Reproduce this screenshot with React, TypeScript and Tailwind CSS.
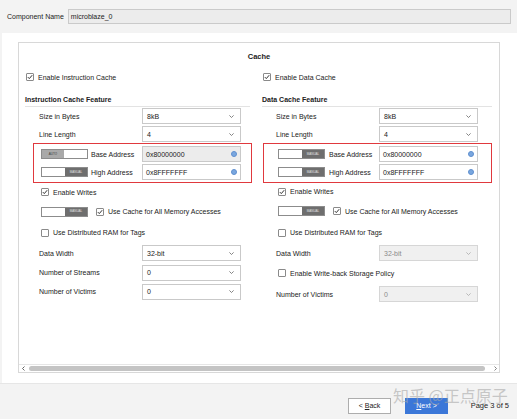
import React from "react";

function Check({ checked }: { checked: boolean }) {
  return (
    <span className="w-[8px] h-[8px] border border-[#8a8a8a] bg-white flex items-center justify-center shrink-0 rounded-[1px]">
      {checked && (
        <svg width="6" height="6" viewBox="0 0 6 6">
          <path d="M0.8 3.1 L2.3 4.6 L5.2 1.2" fill="none" stroke="#333" strokeWidth="1" />
        </svg>
      )}
    </span>
  );
}

function Toggle({ mode }: { mode: "auto" | "manual" }) {
  if (mode === "auto") {
    return (
      <div className="w-[47px] h-[10px] border border-[#8c8c8c] flex shrink-0">
        <div className="w-[22px] bg-[#a9a9a9] flex items-center justify-center text-[3px] leading-none text-[#3a3a3a]">AUTO</div>
        <div className="flex-1 bg-white" />
      </div>
    );
  }
  return (
    <div className="w-[47px] h-[10px] border border-[#8c8c8c] flex shrink-0">
      <div className="w-[23px] bg-white" />
      <div className="flex-1 bg-[#6e6e6e] flex items-center justify-center text-[3px] leading-none text-[#e0e0e0]">MANUAL</div>
    </div>
  );
}

function Chevron({ color = "#666" }: { color?: string }) {
  return (
    <svg width="5" height="3" viewBox="0 0 5 3">
      <path d="M0.4 0.4 L2.5 2.5 L4.6 0.4" fill="none" stroke={color} strokeWidth="0.8" />
    </svg>
  );
}

function Select({ value, disabled }: { value: string; disabled?: boolean }) {
  return (
    <div
      className={
        disabled
          ? "w-[99px] h-[16px] border border-[#d6d6d6] bg-[#f0f0f0] text-[#8a8a8a] flex items-center justify-between pl-[4px] pr-[6px] shrink-0"
          : "w-[99px] h-[16px] border border-[#c9c9c9] bg-white flex items-center justify-between pl-[4px] pr-[6px] shrink-0"
      }
    >
      <span>{value}</span>
      <Chevron color={disabled ? "#aaa" : "#666"} />
    </div>
  );
}

function AddrInput({ value, grey }: { value: string; grey?: boolean }) {
  return (
    <div
      className={
        grey
          ? "w-[99px] h-[16px] border border-[#c9c9c9] bg-[#ececec] flex items-center justify-between pl-[3px] pr-[3px] shrink-0"
          : "w-[99px] h-[16px] border border-[#c9c9c9] bg-white flex items-center justify-between pl-[3px] pr-[3px] shrink-0"
      }
    >
      <span>{value}</span>
      <span className="w-[6px] h-[6px] rounded-full bg-[#7aa7df] border border-[#5f8fcf]" />
    </div>
  );
}

function FieldRow({ label, children, h }: { label: string; children: React.ReactNode; h: string }) {
  return (
    <div className={`${h} flex items-center pl-[14px]`}>
      <span className="w-[103px] shrink-0">{label}</span>
      {children}
    </div>
  );
}

function CheckRow({ label, checked, h, pl }: { label: string; checked: boolean; h: string; pl: string }) {
  return (
    <div className={`${h} flex items-center ${pl} gap-[4px]`}>
      <Check checked={checked} />
      <span>{label}</span>
    </div>
  );
}

function LeftColumn() {
  return (
    <div className="w-[237px] shrink-0 flex flex-col">
      <div className="h-[20px] flex items-center pl-[1px] gap-[4px]">
        <Check checked />
        <span>Enable Instruction Cache</span>
      </div>
      <div className="mt-[6px] h-[14px] flex items-center border-b border-[#e3e3e3] mr-[12px] font-bold">
        Instruction Cache Feature
      </div>
      <FieldRow label="Size in Bytes" h="h-[18px]">
        <Select value="8kB" />
      </FieldRow>
      <FieldRow label="Line Length" h="h-[18px]">
        <Select value="4" />
      </FieldRow>
      <div className="ml-[8px] w-[219px] h-[40px] border border-[#e0393e] flex flex-col justify-center gap-[2px] pl-[7px] pr-[10px]">
        <div className="h-[16px] flex items-center">
          <Toggle mode="auto" />
          <span className="ml-[3px] flex-1">Base Address</span>
          <AddrInput value="0x80000000" grey />
        </div>
        <div className="h-[16px] flex items-center">
          <Toggle mode="manual" />
          <span className="ml-[3px] flex-1">High Address</span>
          <AddrInput value="0x8FFFFFFF" />
        </div>
      </div>
      <CheckRow label="Enable Writes" checked h="h-[18px]" pl="pl-[16px]" />
      <div className="h-[21px] flex items-center pl-[16px]">
        <Toggle mode="manual" />
        <span className="ml-[8px]">
          <Check checked />
        </span>
        <span className="ml-[4px]">Use Cache for All Memory Accesses</span>
      </div>
      <CheckRow label="Use Distributed RAM for Tags" checked={false} h="h-[21px]" pl="pl-[16px]" />
      <FieldRow label="Data Width" h="h-[20px]">
        <Select value="32-bit" />
      </FieldRow>
      <FieldRow label="Number of Streams" h="h-[19px]">
        <Select value="0" />
      </FieldRow>
      <FieldRow label="Number of Victims" h="h-[19px]">
        <Select value="0" />
      </FieldRow>
    </div>
  );
}

function RightColumn() {
  return (
    <div className="flex-1 flex flex-col">
      <div className="h-[20px] flex items-center pl-[1px] gap-[4px]">
        <Check checked />
        <span>Enable Data Cache</span>
      </div>
      <div className="mt-[6px] h-[14px] flex items-center border-b border-[#e3e3e3] mr-[7px] font-bold">
        Data Cache Feature
      </div>
      <FieldRow label="Size in Bytes" h="h-[18px]">
        <Select value="8kB" />
      </FieldRow>
      <FieldRow label="Line Length" h="h-[18px]">
        <Select value="4" />
      </FieldRow>
      <div className="ml-[1px] w-[229px] h-[40px] border border-[#e0393e] flex flex-col justify-center gap-[2px] pl-[14px] pr-[13px]">
        <div className="h-[16px] flex items-center">
          <Toggle mode="manual" />
          <span className="ml-[4px] flex-1">Base Address</span>
          <AddrInput value="0x80000000" />
        </div>
        <div className="h-[16px] flex items-center">
          <Toggle mode="manual" />
          <span className="ml-[4px] flex-1">High Address</span>
          <AddrInput value="0x8FFFFFFF" />
        </div>
      </div>
      <CheckRow label="Enable Writes" checked h="h-[17px]" pl="pl-[16px]" />
      <div className="h-[22px] flex items-center pl-[16px]">
        <Toggle mode="manual" />
        <span className="ml-[8px]">
          <Check checked />
        </span>
        <span className="ml-[4px]">Use Cache for All Memory Accesses</span>
      </div>
      <CheckRow label="Use Distributed RAM for Tags" checked={false} h="h-[21px]" pl="pl-[16px]" />
      <FieldRow label="Data Width" h="h-[20px]">
        <Select value="32-bit" disabled />
      </FieldRow>
      <CheckRow label="Enable Write-back Storage Policy" checked={false} h="h-[20px]" pl="pl-[16px]" />
      <FieldRow label="Number of Victims" h="h-[22px]">
        <Select value="0" disabled />
      </FieldRow>
    </div>
  );
}

export default function App() {
  return (
    <div className="relative w-[517px] h-[419px] bg-[#f3f3f3] flex flex-col overflow-hidden font-['Liberation_Sans',Arial,sans-serif] text-[7px] leading-none text-[#222]">
      {/* top bar */}
      <div className="h-[33px] flex items-center pl-[7px] pr-[6px] gap-[4px] shrink-0">
        <span>Component Name</span>
        <div className="flex-1 h-[15px] border border-[#cacaca] bg-[#ececec] flex items-center pl-[2px]">microblaze_0</div>
      </div>

      {/* white panel */}
      <div className="flex-1 bg-white ml-[2px] pl-[16px] pr-[17px] pt-[9px] pb-[10px] flex flex-col">
        <div className="flex-1 border border-[#d8d8d8] flex flex-col">
          <div className="flex-1 flex flex-col pt-[4px]">
            <div className="h-[20px] flex items-center justify-center font-bold text-[7.5px]">Cache</div>
            <div className="flex pl-[6px]">
              <LeftColumn />
              <RightColumn />
            </div>
          </div>
          <div className="h-[8px] border-t border-[#e6e6e6] flex items-center pl-[2px] pr-[1px]">
            <svg width="5" height="5" viewBox="0 0 5 5" className="shrink-0">
              <path d="M3.5 0.5 L1.5 2.5 L3.5 4.5" fill="none" stroke="#555" strokeWidth="0.9" />
            </svg>
            <div className="ml-[3px] flex-1 h-[5px] rounded-full bg-[#c4c4c4]" />
            <svg width="5" height="5" viewBox="0 0 5 5" className="ml-[8px] shrink-0">
              <path d="M1.5 0.5 L3.5 2.5 L1.5 4.5" fill="none" stroke="#777" strokeWidth="0.9" />
            </svg>
          </div>
        </div>
      </div>

      {/* bottom bar */}
      <div className="h-[36px] shrink-0 border-t border-[#e6e6e6] flex items-center justify-end pr-[8px] pt-[8px]">
        <div className="w-[43px] h-[16px] border border-[#adadad] bg-white flex items-center justify-center">
          &lt; <span className="underline ml-[2px]">B</span>ack
        </div>
        <div className="ml-[14px] w-[43px] h-[16px] bg-[#3b77d8] text-white flex items-center justify-center">
          <span className="underline">N</span>ext &gt;
        </div>
        <span className="ml-[17px] w-[44px] text-[7.5px] text-right whitespace-nowrap">Page 3 of 5</span>
      </div>

      {/* watermark */}
      <div className="absolute left-[393px] top-[387px] text-[16px] leading-none text-[#a8a8a8]/60 font-['Noto_Sans_CJK_SC',sans-serif] whitespace-nowrap">
        知乎 @正点原子
      </div>
    </div>
  );
}
